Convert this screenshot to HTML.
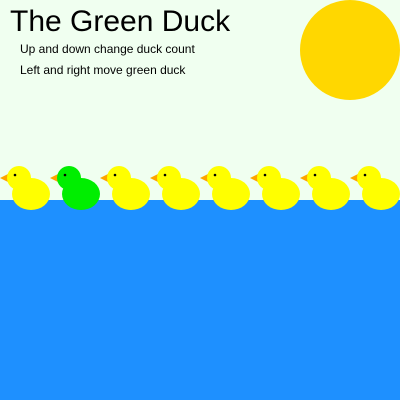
<!DOCTYPE html>
<html><head><style>
html,body{margin:0;padding:0;width:400px;height:400px;overflow:hidden;background:#f0fff0}
</style></head><body>
<svg width="400" height="400" xmlns="http://www.w3.org/2000/svg" style="display:block">
<rect width="400" height="400" fill="#f0fff0"/>
<rect y="200" width="400" height="200" fill="#1e90ff"/>
<circle cx="350" cy="50" r="50" fill="#ffd700"/>
<text x="10" y="31" font-family="Liberation Sans, sans-serif" font-size="30" fill="#000">The Green Duck</text>
<text x="20" y="53" font-family="Liberation Sans, sans-serif" font-size="12" fill="#000">Up and down change duck count</text>
<text x="20" y="74" font-family="Liberation Sans, sans-serif" font-size="12" fill="#000">Left and right move green duck</text>
<defs>
<g id="d">
<polygon points="0,178 8,174 8,182" fill="#ffa500"/>
<circle cx="19" cy="178" r="12"/>
<ellipse cx="31" cy="194" rx="19" ry="16"/>
<circle cx="15" cy="175" r="1.3" fill="#000"/>
</g>
</defs>
<use href="#d" x="0" fill="#ffff00"/>
<use href="#d" x="50" fill="#00ee00"/>
<use href="#d" x="100" fill="#ffff00"/>
<use href="#d" x="150" fill="#ffff00"/>
<use href="#d" x="200" fill="#ffff00"/>
<use href="#d" x="250" fill="#ffff00"/>
<use href="#d" x="300" fill="#ffff00"/>
<use href="#d" x="350" fill="#ffff00"/>
</svg>
</body></html>
